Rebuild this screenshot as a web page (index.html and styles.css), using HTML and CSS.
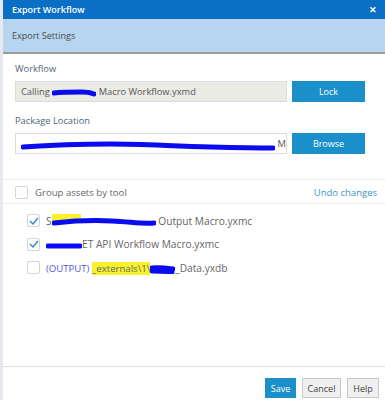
FILE: index.html
```html
<!DOCTYPE html>
<html lang="en">
<head>
    <meta charset="UTF-8">
    <title>Export Workflow</title>
    <link rel="stylesheet" href="styles.css">
</head>
<body>
    <div class="dialog">
        <div class="titlebar">
            <span class="title">Export Workflow</span>
            <span class="close">&#x2715;</span>
        </div>
        <div class="section-header">Export Settings</div>

        <div class="form">
            <label class="field-label">Workflow</label>
            <div class="field-row">
                <div class="field readonly">
                    <span>Calling <span class="redacted calling"><svg width="44" height="8" viewBox="0 0 44 8"><path d="M2 4 C10 3 20 3 30 3 S40 5 42 5" /></svg></span> Macro Workflow.yxmd</span>
                </div>
                <button class="btn primary wide">Lock</button>
            </div>

            <label class="field-label">Package Location</label>
            <div class="field-row">
                <div class="field">
                    <span><span class="redacted path"><svg width="254" height="10" viewBox="0 0 254 10"><path d="M2 6 C30 4 60 3 90 3 S150 5 190 6 S240 7 252 7" /></svg></span> Ma</span>
                </div>
                <button class="btn primary wide">Browse</button>
            </div>
        </div>

        <div class="group-bar">
            <label class="check-label"><span class="checkbox"></span>Group assets by tool</label>
            <a class="undo">Undo changes</a>
        </div>

        <ul class="assets">
            <li>
                <span class="checkbox checked"><svg width="10" height="8" viewBox="0 0 10 8"><path d="M1 4 L4 7 L9 1" /></svg></span>
                <span>S<span class="redacted report"><span class="mark"></span><svg width="104" height="9" viewBox="0 0 104 9"><path d="M2 5 C20 3 40 2 60 3 S90 6 102 5" /></svg></span> Output Macro.yxmc</span>
            </li>
            <li>
                <span class="checkbox checked"><svg width="10" height="8" viewBox="0 0 10 8"><path d="M1 4 L4 7 L9 1" /></svg></span>
                <span><span class="redacted api"><svg width="36" height="8" viewBox="0 0 36 8"><path d="M2 4 C10 4 25 4 34 4" /></svg></span>ET API Workflow Macro.yxmc</span>
            </li>
            <li>
                <span class="checkbox"></span>
                <span><span class="output">(OUTPUT)</span> <span class="mark path-mark">_externals\1\</span><span class="redacted data"><svg width="25" height="9" viewBox="0 0 25 9"><path d="M2 3 C8 2 16 3 23 4 M2 6 C10 6 16 6 22 7" /></svg></span>_Data.yxdb</span>
            </li>
        </ul>

        <div class="footer">
            <button class="btn primary save">Save</button>
            <button class="btn cancel">Cancel</button>
            <button class="btn help">Help</button>
        </div>
    </div>
</body>
</html>
```

FILE: styles.css
```css
* {
    margin: 0;
    padding: 0;
    box-sizing: border-box;
}
body {
    font-family: 'Open Sans', 'Noto Sans', sans-serif;
    font-size: 9.3px;
    background: #e6eaf0;
    color: #555;
    width: 385px;
    height: 400px;
    overflow: hidden;
}
.dialog {
    margin-left: 3px;
    height: 400px;
    background: #fff;
    display: flex;
    flex-direction: column;
}
.titlebar {
    height: 19px;
    background: #0b6fc6;
    color: #fff;
    display: flex;
    justify-content: space-between;
    align-items: center;
    padding: 0 8px 0 9px;
}
.title {
    font-size: 9px;
    font-weight: 600;
}
.close {
    font-size: 9px;
    font-weight: 700;
}
.section-header {
    height: 35px;
    background: #b7d5f0;
    border-bottom: 2px solid #9c9c9c;
    padding-left: 9px;
    display: flex;
    align-items: center;
    font-size: 9px;
    color: #4a4a4a;
}
.form {
    padding: 8px 20px 0 12px;
}
.field-label {
    display: block;
    font-size: 9.3px;
    color: #4f6577;
    margin-bottom: 6px;
}
.field-row {
    display: flex;
    gap: 5px;
    margin-bottom: 12px;
}
.field {
    flex: 1;
    min-width: 0;
    height: 21px;
    border: 1px solid #dcdcdc;
    background: #fff;
    padding: 0 5px;
    display: flex;
    align-items: center;
    white-space: nowrap;
    overflow: hidden;
    color: #555;
}
.field.readonly {
    background: #ebebe6;
}
.redacted {
    position: relative;
    display: inline-block;
    vertical-align: middle;
    height: 10px;
}
.redacted.calling {
    width: 44px;
}
.redacted.path {
    width: 254px;
}
.redacted.report {
    width: 104px;
}
.redacted.api {
    width: 36px;
}
.redacted.data {
    width: 25px;
}
.redacted svg {
    position: absolute;
    left: 0;
    top: 1px;
}
.redacted path {
    fill: none;
    stroke: #0b0bf0;
    stroke-width: 5;
    stroke-linecap: round;
}
.redacted .mark {
    position: absolute;
    left: 0;
    top: -3px;
    width: 29px;
    height: 8px;
}
.btn {
    font-family: inherit;
    font-size: 9px;
    height: 20px;
    padding: 0;
    border: 1px solid #c8c8c8;
    background: #f0f0f0;
    color: #444;
}
.btn.primary {
    background: #1b8fca;
    border-color: #1b8fca;
    color: #fff;
}
.btn.wide {
    width: 73px;
    height: 21px;
    flex-shrink: 0;
}
.btn.save {
    width: 31px;
}
.btn.cancel {
    width: 39px;
}
.btn.help {
    width: 32px;
}
.group-bar {
    margin-top: 13px;
    border-top: 1px solid #eaeaea;
    border-bottom: 1px solid #eaeaea;
    height: 25px;
    display: flex;
    justify-content: space-between;
    align-items: center;
    padding: 1px 8px 0 12px;
}
.check-label {
    display: flex;
    align-items: center;
    gap: 7px;
    color: #666;
    font-size: 9.6px;
}
.checkbox {
    width: 13px;
    height: 13px;
    border: 1px solid #d4d4d4;
    border-radius: 2px;
    background: #fff;
    display: inline-flex;
    align-items: center;
    justify-content: center;
    flex-shrink: 0;
}
.checkbox svg path {
    fill: none;
    stroke: #2a87d0;
    stroke-width: 1.4;
}
.undo {
    color: #3d94c9;
    font-size: 9.5px;
}
.assets {
    list-style: none;
    padding: 5px 0 0 24px;
}
.assets li {
    height: 23.5px;
    display: flex;
    align-items: center;
    gap: 6px;
    font-size: 10.2px;
    color: #666;
    white-space: nowrap;
}
.mark {
    background: #f7f22a;
}
.output,
.path-mark {
    font-size: 9.6px;
}
.output {
    color: #5656d6;
}
.footer {
    margin-top: auto;
    border-top: 1px solid #ddd;
    height: 34px;
    display: flex;
    justify-content: flex-end;
    align-items: flex-start;
    gap: 6px;
    padding: 11px 6px 0 0;
}
```
